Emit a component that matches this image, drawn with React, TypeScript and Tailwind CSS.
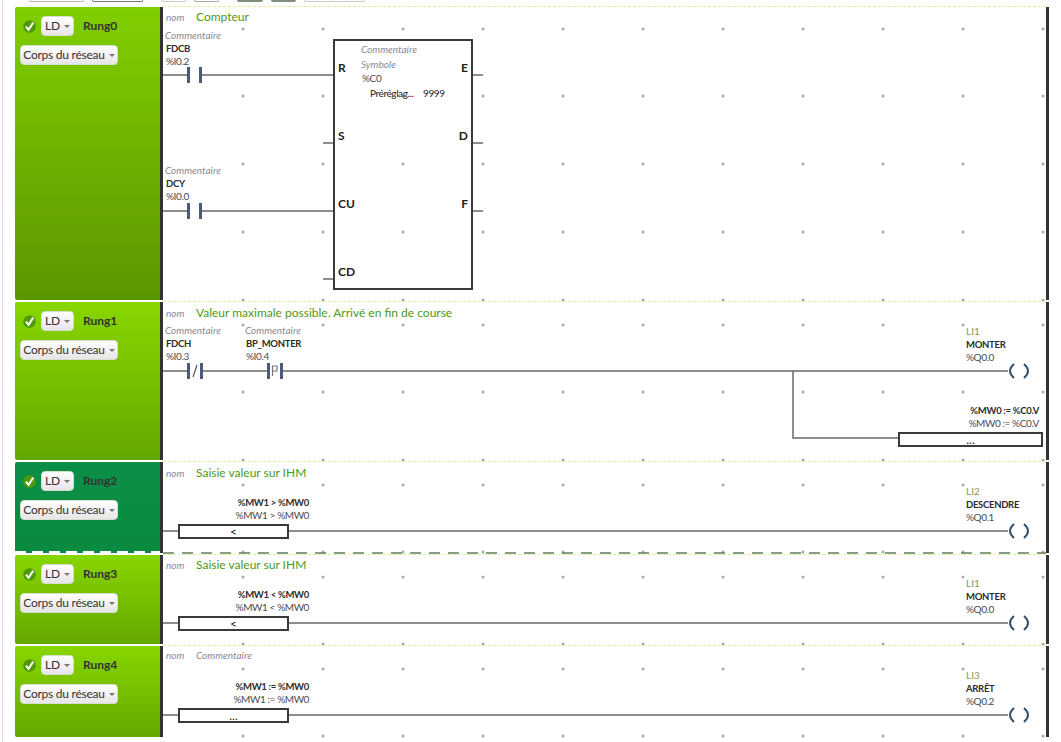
import React from "react";

const X = 163;
const W = 883;
const font = { fontFamily: 'Lato, "Noto Sans", sans-serif' };
const wire = "#686868";

function Check() {
  return (
    <svg width="13" height="13" viewBox="0 0 14 14" className="shrink-0">
      <circle cx="7" cy="7" r="6.8" fill="#4f9a08" />
      <path d="M3.2 7.2 L6 10.6 L11 2.8" fill="none" stroke="#fff" strokeWidth="2.2" />
    </svg>
  );
}

function Caret() {
  return <span className="ml-[4px] inline-block h-0 w-0 border-x-[3px] border-t-[3px] border-x-transparent border-t-[#777]" />;
}

function Btn({ children, className = "" }: { children: React.ReactNode; className?: string }) {
  return (
    <div className={"flex h-[20px] items-center justify-center whitespace-nowrap rounded-[4px] border border-[#d8ddd2] bg-gradient-to-b from-white to-[#e6e6e6] text-[12px] tracking-[-0.25px] text-[#333] " + className}>
      {children}
      <Caret />
    </div>
  );
}

function Side({ name, gradient, dashed }: { name: string; gradient: string; dashed?: boolean }) {
  return (
    <div className={"relative w-[145px] shrink-0 rounded-l-[2px] pl-[5px] pt-[9px] " + gradient}>
      <div className="flex items-center">
        <span className="ml-[3px]"><Check /></span>
        <Btn className="ml-[5px] w-[33px]">LD</Btn>
        <span className="ml-[9px] text-[12px] font-bold text-[#333]">{name}</span>
      </div>
      <Btn className="mt-[9px] w-[98px]">Corps du réseau</Btn>
      {dashed && (
        <svg className="absolute bottom-0 left-0" width="145" height="2">
          <line x1="0" x2="145" y1="1" y2="1" stroke="#fff" strokeWidth="2" strokeDasharray="11 6" />
        </svg>
      )}
    </div>
  );
}

function Dots({ ys }: { ys: number[] }) {
  const xs = Array.from({ length: 11 }, (_, i) => 243 + i * 80);
  return (
    <>
      {ys.map((y) =>
        xs.map((x) => <circle key={x + "-" + y} cx={x} cy={y} r="1.5" fill="#a3aca0" />)
      )}
    </>
  );
}

function Contact({ x, y, mark }: { x: number; y: number; mark?: string }) {
  const gap = mark ? 13 : 12;
  return (
    <g>
      <rect x={x} y={y - 8} width="3" height="16" fill="#4a5a78" />
      <rect x={x + gap} y={y - 8} width="3" height="16" fill="#4a5a78" />
      {mark === "/" && <path d={`M${x + 6} ${y + 6} L${x + 10} ${y - 6}`} stroke="#555" strokeWidth="1.2" />}
      {mark === "P" && <path d={`M${x + 5.5} ${y + 5} V${y - 5} H${x + 10} V${y} H${x + 5.5}`} fill="none" stroke="#777" strokeWidth="1.2" />}
    </g>
  );
}

function Coil({ y }: { y: number }) {
  return (
    <g fill="none" stroke="#34506e" strokeWidth="2">
      <path d={`M1014 ${y - 7} Q1006 ${y} 1014 ${y + 7}`} />
      <path d={`M1024 ${y - 7} Q1032 ${y} 1024 ${y + 7}`} />
    </g>
  );
}

const note = "text-[10px] leading-[13px] italic text-[#8a8a96] whitespace-nowrap";
const bold = "text-[9.5px] leading-[13px] font-bold tracking-[-0.3px] text-[#2c2c2c] whitespace-nowrap";
const addr = "text-[10px] leading-[13px] tracking-[-0.4px] text-[#4a4a55] whitespace-nowrap";
const pin = "text-[12px] leading-[16px] font-bold text-[#222]";
const box = "flex h-[15px] items-center justify-center border-2 border-[#3a3a3a] bg-white text-[12px] leading-none text-[#222]";

function Header({ children, placeholder, className = "pt-[3px]" }: { children: React.ReactNode; placeholder?: boolean; className?: string }) {
  return (
    <div className={"relative flex items-center pl-[3px] " + className}>
      <span className={note + " w-[30px]"}>nom</span>
      <span className={placeholder ? note : "text-[12px] leading-[16px] text-[#4d9a16] whitespace-nowrap"}>{children}</span>
    </div>
  );
}

function ContactNode({ id, addrText, className }: { id: string; addrText: string; className: string }) {
  return (
    <div className={"absolute flex flex-col " + className}>
      <span className={note + " -ml-px"}>Commentaire</span>
      <span className={bold}>{id}</span>
      <span className={addr}>{addrText}</span>
    </div>
  );
}

function CoilNode({ li, id, addrText, className }: { li: string; id: string; addrText: string; className: string }) {
  return (
    <div className={"absolute left-[803px] flex flex-col " + className}>
      <span className="text-[10px] leading-[13px] text-[#7d9a5a]">{li}</span>
      <span className={bold}>{id}</span>
      <span className={addr}>{addrText}</span>
    </div>
  );
}

function ExprNode({ expr, op, className }: { expr: string; op: string; className: string }) {
  return (
    <div className={"absolute left-[15px] flex w-[131px] flex-col items-end " + className}>
      <span className={bold}>{expr}</span>
      <span className={addr}>{expr}</span>
      <div className={box + " mt-[2px] w-[111px] self-start"}>{op}</div>
    </div>
  );
}

function Rung({
  name,
  top,
  h,
  gradient,
  children,
  art,
  dots,
  dashed,
}: {
  name: string;
  top: number;
  h: number;
  gradient: string;
  children: React.ReactNode;
  art: React.ReactNode;
  dots: number[];
  dashed?: boolean;
}) {
  return (
    <div className="flex" style={{ height: h }}>
      <Side name={name} gradient={gradient} dashed={dashed} />
      <div className="w-[3px] shrink-0 bg-[#333]" />
      <div className="relative flex-1 bg-white">
        <svg className="absolute left-0 top-0 overflow-visible" width={W} height={h} viewBox={`${X} ${top} ${W} ${h}`}>
          <line x1={X} x2={X + W} y1={top - 0.5} y2={top - 0.5} stroke="#e2eda0" strokeDasharray="3 2" />
          <Dots ys={dots} />
          {art}
          {dashed && <line x1={X} x2={X + W} y1={top + h} y2={top + h} stroke="#5f7f5f" strokeWidth="1.5" strokeDasharray="11 8" />}
        </svg>
        {children}
      </div>
      <div className="w-[3px] shrink-0 bg-[#333]" />
    </div>
  );
}

const green0 = "bg-gradient-to-b from-[#80cf00] to-[#5c9600]";
const green1 = "bg-gradient-to-b from-[#88d600] to-[#64a800]";
const teal = "bg-gradient-to-b from-[#0b8f48] to-[#0a8a40]";

export default function App() {
  return (
    <div className="h-[742px] w-[1061px] overflow-hidden bg-white" style={font}>
      <div className="ml-[2px] h-full border-l border-[#e3d6e8] px-[12px]">
        <div className="flex h-[7px] items-start">
          <div className="flex h-[2px] gap-[8px] pl-[14px]">
            <div className="w-[55px] rounded-b-[3px] border border-t-0 border-[#bbb]" />
            <div className="w-[51px] rounded-b-[3px] border border-t-0 border-[#777]" />
            <div className="ml-[10px] w-[25px] rounded-b-[3px] border border-t-0 border-[#ccc]" />
            <div className="w-[25px] rounded-b-[3px] border border-t-0 border-[#aaa]" />
            <div className="ml-[10px] w-[26px] rounded-b-[3px] bg-[#7e8e7e]" />
            <div className="w-[25px] rounded-b-[3px] bg-[#7e8e7e]" />
            <div className="w-[61px] rounded-b-[3px] border border-t-0 border-[#ccc]" />
          </div>
        </div>
        <div className="flex flex-col gap-[2px]">
          <Rung
            name="Rung0"
            top={7}
            h={293}
            gradient={green0}
            dots={[29, 96, 164, 232, 300]}
            art={
              <g>
                <path d="M163 75 H187 M201 75 H333 M163 211 H187 M201 211 H333 M323 143 H333 M323 279 H333 M473 75 H483 M473 143 H483 M473 211 H483" fill="none" stroke={wire} strokeWidth="1.5" />
                <Contact x={187} y={75} />
                <Contact x={187} y={211} />
              </g>
            }
          >
            <Header className="pt-[2px]">Compteur</Header>
            <ContactNode id="FDCB" addrText="%I0.2" className="left-[3px] top-[22px]" />
            <ContactNode id="DCY" addrText="%I0.0" className="left-[3px] top-[157px]" />
            <div className="absolute left-[170px] top-[32px] flex h-[251px] w-[140px] border-2 border-[#3a3a3a]">
              <div className="flex w-[26px] flex-col gap-[52px] pl-[3px] pt-[19px]">
                <span className={pin}>R</span>
                <span className={pin}>S</span>
                <span className={pin}>CU</span>
                <span className={pin}>CD</span>
              </div>
              <div className="flex flex-1 flex-col pt-[1px]">
                <span className={note + " leading-[14.5px]"}>Commentaire</span>
                <span className={note + " leading-[14.5px]"}>Symbole</span>
                <span className={addr + " ml-px leading-[14.5px]"}>%C0</span>
                <div className={"ml-[9px] flex text-[#222] " + addr + " leading-[14.5px]"}>
                  <span className="w-[53px]">Préréglag...</span>
                  <span>9999</span>
                </div>
              </div>
              <div className="flex flex-col gap-[52px] pr-[3px] pt-[19px] text-right">
                <span className={pin}>E</span>
                <span className={pin}>D</span>
                <span className={pin}>F</span>
              </div>
            </div>
          </Rung>

          <Rung
            name="Rung1"
            top={302}
            h={158}
            gradient={green1}
            dots={[325, 392, 460]}
            art={
              <g>
                <path d="M163 371 H187 M203 371 H267 M283 371 H1008 M793 371 V438 H898" fill="none" stroke={wire} strokeWidth="1.5" />
                <Contact x={187} y={371} mark="/" />
                <Contact x={267} y={371} mark="P" />
                <Coil y={371} />
              </g>
            }
          >
            <Header>Valeur maximale possible. Arrivé en fin de course</Header>
            <ContactNode id="FDCH" addrText="%I0.3" className="left-[3px] top-[22px]" />
            <ContactNode id="BP_MONTER" addrText="%I0.4" className="left-[83px] top-[22px]" />
            <CoilNode li="LI1" id="MONTER" addrText="%Q0.0" className="top-[23px]" />
            <div className="absolute left-[735px] top-[102px] flex w-[145px] flex-col">
              <div className="flex flex-col items-end pr-[4px]">
                <span className={bold}>%MW0 := %C0.V</span>
                <span className={addr}>%MW0 := %C0.V</span>
              </div>
              <div className={box + " mt-[2px]"}>...</div>
            </div>
          </Rung>

          <Rung
            name="Rung2"
            top={462}
            h={91}
            gradient={teal}
            dots={[485, 552]}
            dashed
            art={
              <g>
                <path d="M163 531 H178 M289 531 H1008" fill="none" stroke={wire} strokeWidth="1.5" />
                <Coil y={531} />
              </g>
            }
          >
            <Header>Saisie valeur sur IHM</Header>
            <ExprNode expr="%MW1 > %MW0" op="<" className="top-[34px]" />
            <CoilNode li="LI2" id="DESCENDRE" addrText="%Q0.1" className="top-[23px]" />
          </Rung>

          <Rung
            name="Rung3"
            top={555}
            h={89}
            gradient={green1}
            dots={[577, 644]}
            art={
              <g>
                <path d="M163 623 H178 M289 623 H1008" fill="none" stroke={wire} strokeWidth="1.5" />
                <Coil y={623} />
              </g>
            }
          >
            <Header className="pt-[2px]">Saisie valeur sur IHM</Header>
            <ExprNode expr="%MW1 < %MW0" op="<" className="top-[33px]" />
            <CoilNode li="LI1" id="MONTER" addrText="%Q0.0" className="top-[22px]" />
          </Rung>

          <Rung
            name="Rung4"
            top={646}
            h={91}
            gradient={green1}
            dots={[669, 736]}
            art={
              <g>
                <path d="M163 715 H178 M289 715 H1008" fill="none" stroke={wire} strokeWidth="1.5" />
                <Coil y={715} />
              </g>
            }
          >
            <Header placeholder>Commentaire</Header>
            <ExprNode expr="%MW1 := %MW0" op="..." className="top-[34px]" />
            <CoilNode li="LI3" id="ARRÊT" addrText="%Q0.2" className="top-[23px]" />
          </Rung>
        </div>
      </div>
    </div>
  );
}
